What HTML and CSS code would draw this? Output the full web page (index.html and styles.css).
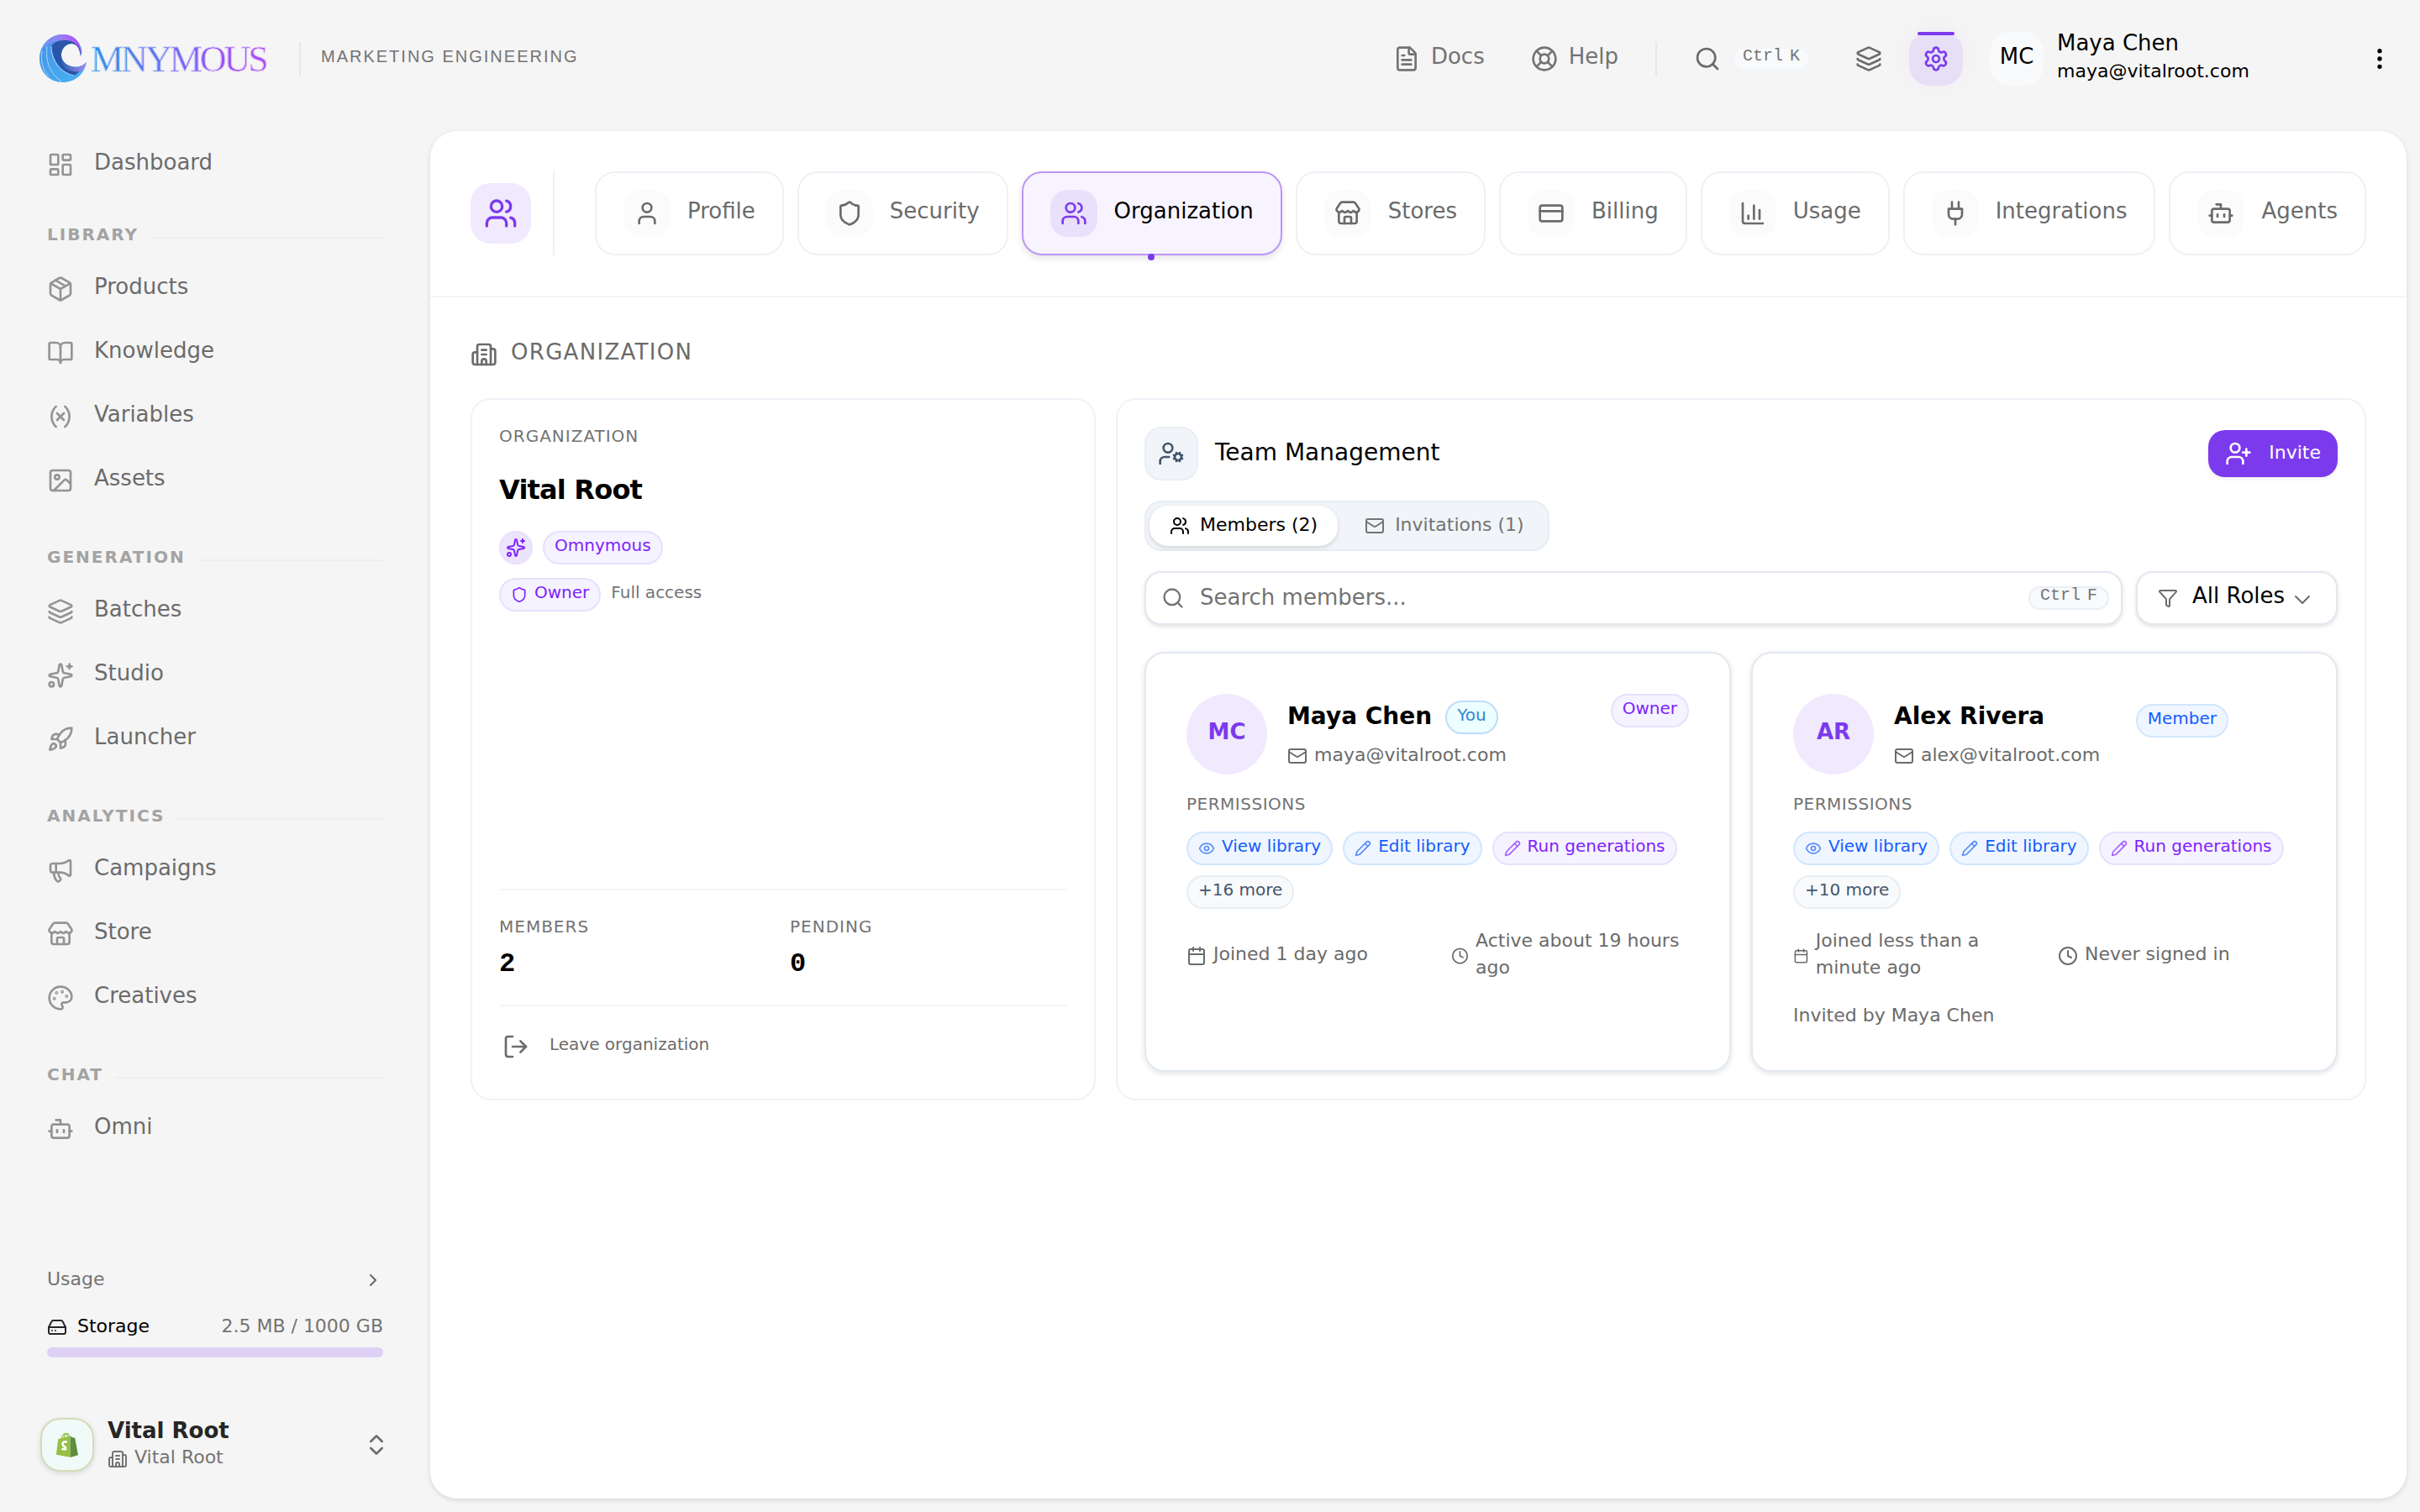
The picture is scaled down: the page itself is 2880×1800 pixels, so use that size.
FILE: index.html
```html
<!DOCTYPE html>
<html lang="en">
<head>
    <meta charset="UTF-8">
    <title>Omnymous - Organization</title>
    <link rel="stylesheet" href="styles.css">
</head>
<body>
    <!-- icon set -->
    <svg class="sprite" aria-hidden="true">
        <symbol id="dashboard" viewBox="0 0 24 24"><rect x="3" y="3" width="7" height="9" rx="1"/><rect x="14" y="3" width="7" height="5" rx="1"/><rect x="14" y="12" width="7" height="9" rx="1"/><rect x="3" y="16" width="7" height="5" rx="1"/></symbol>
        <symbol id="package" viewBox="0 0 24 24"><path d="M11 21.73a2 2 0 0 0 2 0l7-4A2 2 0 0 0 21 16V8a2 2 0 0 0-1-1.73l-7-4a2 2 0 0 0-2 0l-7 4A2 2 0 0 0 3 8v8a2 2 0 0 0 1 1.73z"/><path d="M12 22V12"/><path d="M3.29 7 12 12l8.71-5"/><path d="m7.5 4.27 9 5.15"/></symbol>
        <symbol id="book" viewBox="0 0 24 24"><path d="M12 7v14"/><path d="M3 18a1 1 0 0 1-1-1V4a1 1 0 0 1 1-1h5a4 4 0 0 1 4 4 4 4 0 0 1 4-4h5a1 1 0 0 1 1 1v13a1 1 0 0 1-1 1h-6a3 3 0 0 0-3 3 3 3 0 0 0-3-3z"/></symbol>
        <symbol id="variable" viewBox="0 0 24 24"><path d="M8 21s-4-3-4-9 4-9 4-9"/><path d="M16 3s4 3 4 9-4 9-4 9"/><path d="m15 9-6 6"/><path d="m9 9 6 6"/></symbol>
        <symbol id="image" viewBox="0 0 24 24"><rect x="3" y="3" width="18" height="18" rx="2"/><circle cx="9" cy="9" r="2"/><path d="m21 15-3.086-3.086a2 2 0 0 0-2.828 0L6 21"/></symbol>
        <symbol id="layers" viewBox="0 0 24 24"><path d="M12.83 2.18a2 2 0 0 0-1.66 0L2.6 6.08a1 1 0 0 0 0 1.83l8.58 3.91a2 2 0 0 0 1.66 0l8.58-3.9a1 1 0 0 0 0-1.83z"/><path d="M2 12a1 1 0 0 0 .58.91l8.6 3.91a2 2 0 0 0 1.65 0l8.58-3.9A1 1 0 0 0 22 12"/><path d="M2 17a1 1 0 0 0 .58.91l8.6 3.91a2 2 0 0 0 1.65 0l8.58-3.9A1 1 0 0 0 22 17"/></symbol>
        <symbol id="sparkles" viewBox="0 0 24 24"><path d="M11.017 2.814a1 1 0 0 1 1.966 0l1.051 5.558a2 2 0 0 0 1.594 1.594l5.558 1.051a1 1 0 0 1 0 1.966l-5.558 1.051a2 2 0 0 0-1.594 1.594l-1.051 5.558a1 1 0 0 1-1.966 0l-1.051-5.558a2 2 0 0 0-1.594-1.594l-5.558-1.051a1 1 0 0 1 0-1.966l5.558-1.051a2 2 0 0 0 1.594-1.594z"/><path d="M20 2v4"/><path d="M22 4h-4"/><circle cx="4" cy="20" r="2"/></symbol>
        <symbol id="rocket" viewBox="0 0 24 24"><path d="M4.5 16.5c-1.5 1.26-2 5-2 5s3.74-.5 5-2c.71-.84.7-2.13-.09-2.91a2.18 2.18 0 0 0-2.91-.09z"/><path d="m12 15-3-3a22 22 0 0 1 2-3.95A12.88 12.88 0 0 1 22 2c0 2.72-.78 7.5-6 11a22.35 22.35 0 0 1-4 2z"/><path d="M9 12H4s.55-3.03 2-4c1.62-1.08 5 0 5 0"/><path d="M12 15v5s3.03-.55 4-2c1.08-1.62 0-5 0-5"/></symbol>
        <symbol id="megaphone" viewBox="0 0 24 24"><path d="M11 6a13 13 0 0 0 8.4-2.8A1 1 0 0 1 21 4v12a1 1 0 0 1-1.6.8A13 13 0 0 0 11 14H5a2 2 0 0 1-2-2V8a2 2 0 0 1 2-2z"/><path d="M6 14a12 12 0 0 0 2.4 7.2 2 2 0 0 0 3.2-2.4A8 8 0 0 1 10 14"/><path d="M8 6v8"/></symbol>
        <symbol id="store" viewBox="0 0 24 24"><path d="M15 21v-5a1 1 0 0 0-1-1h-4a1 1 0 0 0-1 1v5"/><path d="M17.774 10.31a1.12 1.12 0 0 0-1.549 0 2.5 2.5 0 0 1-3.451 0 1.12 1.12 0 0 0-1.548 0 2.5 2.5 0 0 1-3.452 0 1.12 1.12 0 0 0-1.549 0 2.5 2.5 0 0 1-3.77-3.248l2.889-4.184A2 2 0 0 1 7 2h10a2 2 0 0 1 1.653.873l2.895 4.192a2.5 2.5 0 0 1-3.774 3.244"/><path d="M4 10.95V19a2 2 0 0 0 2 2h12a2 2 0 0 0 2-2v-8.05"/></symbol>
        <symbol id="palette" viewBox="0 0 24 24"><path d="M12 22a1 1 0 0 1 0-20 10 9 0 0 1 10 9 5 5 0 0 1-5 5h-2.25a1.75 1.75 0 0 0-1.4 2.8l.3.4a1.75 1.75 0 0 1-1.4 2.8z"/><circle cx="13.5" cy="6.5" r=".5"/><circle cx="17.5" cy="10.5" r=".5"/><circle cx="6.5" cy="12.5" r=".5"/><circle cx="8.5" cy="7.5" r=".5"/></symbol>
        <symbol id="bot" viewBox="0 0 24 24"><path d="M12 8V4H8"/><rect x="4" y="8" width="16" height="12" rx="2"/><path d="M2 14h2"/><path d="M20 14h2"/><path d="M15 13v2"/><path d="M9 13v2"/></symbol>
        <symbol id="chevron-right" viewBox="0 0 24 24"><path d="m9 18 6-6-6-6"/></symbol>
        <symbol id="chevron-down" viewBox="0 0 24 24"><path d="m6 9 6 6 6-6"/></symbol>
        <symbol id="chevrons" viewBox="0 0 24 24"><path d="m7 15 5 5 5-5"/><path d="m7 9 5-5 5 5"/></symbol>
        <symbol id="drive" viewBox="0 0 24 24"><path d="M22 12H2"/><path d="M5.45 5.11 2 12v6a2 2 0 0 0 2 2h16a2 2 0 0 0 2-2v-6l-3.45-6.89A2 2 0 0 0 16.76 4H7.24a2 2 0 0 0-1.79 1.11z"/><path d="M6 16h.01"/><path d="M10 16h.01"/></symbol>
        <symbol id="building" viewBox="0 0 24 24"><path d="M10 12h4"/><path d="M10 8h4"/><path d="M14 21v-3a2 2 0 0 0-4 0v3"/><path d="M6 10H4a2 2 0 0 0-2 2v7a2 2 0 0 0 2 2h16a2 2 0 0 0 2-2V9a2 2 0 0 0-2-2h-2"/><path d="M6 21V5a2 2 0 0 1 2-2h8a2 2 0 0 1 2 2v16"/></symbol>
        <symbol id="file" viewBox="0 0 24 24"><path d="M6 22a2 2 0 0 1-2-2V4a2 2 0 0 1 2-2h8a2.4 2.4 0 0 1 1.704.706l3.588 3.588A2.4 2.4 0 0 1 20 8v12a2 2 0 0 1-2 2z"/><path d="M14 2v5a1 1 0 0 0 1 1h5"/><path d="M10 9H8"/><path d="M16 13H8"/><path d="M16 17H8"/></symbol>
        <symbol id="lifebuoy" viewBox="0 0 24 24"><circle cx="12" cy="12" r="10"/><path d="m4.93 4.93 4.24 4.24"/><path d="m14.83 9.17 4.24-4.24"/><path d="m14.83 14.83 4.24 4.24"/><path d="m9.17 14.83-4.24 4.24"/><circle cx="12" cy="12" r="4"/></symbol>
        <symbol id="search" viewBox="0 0 24 24"><path d="m21 21-4.34-4.34"/><circle cx="11" cy="11" r="8"/></symbol>
        <symbol id="settings" viewBox="0 0 24 24"><path d="M9.671 4.136a2.34 2.34 0 0 1 4.659 0 2.34 2.34 0 0 0 3.319 1.915 2.34 2.34 0 0 1 2.33 4.033 2.34 2.34 0 0 0 0 3.831 2.34 2.34 0 0 1-2.33 4.033 2.34 2.34 0 0 0-3.319 1.915 2.34 2.34 0 0 1-4.659 0 2.34 2.34 0 0 0-3.32-1.915 2.34 2.34 0 0 1-2.33-4.033 2.34 2.34 0 0 0 0-3.831A2.34 2.34 0 0 1 6.35 6.051a2.34 2.34 0 0 0 3.319-1.915"/><circle cx="12" cy="12" r="3"/></symbol>
        <symbol id="dots" viewBox="0 0 24 24"><circle cx="12" cy="12" r="1"/><circle cx="12" cy="5" r="1"/><circle cx="12" cy="19" r="1"/></symbol>
        <symbol id="users" viewBox="0 0 24 24"><path d="M16 21v-2a4 4 0 0 0-4-4H6a4 4 0 0 0-4 4v2"/><path d="M16 3.128a4 4 0 0 1 0 7.744"/><path d="M22 21v-2a4 4 0 0 0-3-3.87"/><circle cx="9" cy="7" r="4"/></symbol>
        <symbol id="user" viewBox="0 0 24 24"><path d="M19 21v-2a4 4 0 0 0-4-4H9a4 4 0 0 0-4 4v2"/><circle cx="12" cy="7" r="4"/></symbol>
        <symbol id="shield" viewBox="0 0 24 24"><path d="M20 13c0 5-3.5 7.5-7.66 8.95a1 1 0 0 1-.67-.01C7.5 20.5 4 18 4 13V6a1 1 0 0 1 1-1c2 0 4.5-1.2 6.24-2.72a1.17 1.17 0 0 1 1.52 0C14.51 3.81 17 5 19 5a1 1 0 0 1 1 1z"/></symbol>
        <symbol id="card" viewBox="0 0 24 24"><rect x="2" y="5" width="20" height="14" rx="2"/><path d="M2 10h20"/></symbol>
        <symbol id="chart" viewBox="0 0 24 24"><path d="M3 3v16a2 2 0 0 0 2 2h16"/><path d="M18 17V9"/><path d="M13 17V5"/><path d="M8 17v-3"/></symbol>
        <symbol id="plug" viewBox="0 0 24 24"><path d="M12 22v-5"/><path d="M9 8V2"/><path d="M15 8V2"/><path d="M18 8v5a4 4 0 0 1-4 4h-4a4 4 0 0 1-4-4V8Z"/></symbol>
        <symbol id="logout" viewBox="0 0 24 24"><path d="m16 17 5-5-5-5"/><path d="M21 12H9"/><path d="M9 21H5a2 2 0 0 1-2-2V5a2 2 0 0 1 2-2h4"/></symbol>
        <symbol id="user-cog" viewBox="0 0 24 24"><path d="M10 15H6a4 4 0 0 0-4 4v2"/><circle cx="9" cy="7" r="4"/><path d="m14.305 16.53.923-.382"/><path d="m15.228 13.852-.923-.383"/><path d="m16.852 12.228-.383-.923"/><path d="m16.852 17.772-.383.924"/><path d="m19.148 12.228.383-.923"/><path d="m19.53 18.696-.382-.924"/><path d="m20.772 13.852.924-.383"/><path d="m20.772 16.148.924.383"/><circle cx="18" cy="15" r="3"/></symbol>
        <symbol id="user-plus" viewBox="0 0 24 24"><path d="M16 21v-2a4 4 0 0 0-4-4H6a4 4 0 0 0-4 4v2"/><circle cx="9" cy="7" r="4"/><path d="M19 8v6"/><path d="M22 11h-6"/></symbol>
        <symbol id="mail" viewBox="0 0 24 24"><path d="m22 7-8.991 5.727a2 2 0 0 1-2.009 0L2 7"/><rect x="2" y="4" width="20" height="16" rx="2"/></symbol>
        <symbol id="funnel" viewBox="0 0 24 24"><path d="M10 20a1 1 0 0 0 .553.895l2 1A1 1 0 0 0 14 21v-7a2 2 0 0 1 .517-1.341L21.74 4.67A1 1 0 0 0 21 3H3a1 1 0 0 0-.742 1.67l7.225 7.989A2 2 0 0 1 10 14z"/></symbol>
        <symbol id="eye" viewBox="0 0 24 24"><path d="M2.062 12.348a1 1 0 0 1 0-.696 10.75 10.75 0 0 1 19.876 0 1 1 0 0 1 0 .696 10.75 10.75 0 0 1-19.876 0"/><circle cx="12" cy="12" r="3"/></symbol>
        <symbol id="pencil" viewBox="0 0 24 24"><path d="M21.174 6.812a1 1 0 0 0-3.986-3.987L3.842 16.174a2 2 0 0 0-.5.83l-1.321 4.352a.5.5 0 0 0 .623.622l4.353-1.32a2 2 0 0 0 .83-.497z"/><path d="m15 5 4 4"/></symbol>
        <symbol id="calendar" viewBox="0 0 24 24"><path d="M8 2v4"/><path d="M16 2v4"/><rect x="3" y="4" width="18" height="18" rx="2"/><path d="M3 10h18"/></symbol>
        <symbol id="clock" viewBox="0 0 24 24"><circle cx="12" cy="12" r="10"/><path d="M12 6v6l4 2"/></symbol>
    </svg>

    <header class="topbar">
        <div class="logo">
            <svg class="logo-mark" viewBox="0 0 58 58">
                <defs>
                    <linearGradient id="gTop" x1="0" y1="0" x2="1" y2="0"><stop offset="0" stop-color="#6f9cf3"/><stop offset=".5" stop-color="#9b7bf5"/><stop offset="1" stop-color="#b44cf5"/></linearGradient>
                    <linearGradient id="gBlue" x1="0" y1="0" x2="1" y2="1"><stop offset="0" stop-color="#4a8fe6"/><stop offset="1" stop-color="#46b4f2"/></linearGradient>
                    <linearGradient id="gTail" x1="0" y1="0" x2="1" y2="0"><stop offset="0" stop-color="#2c62b8"/><stop offset="1" stop-color="#a48cf0"/></linearGradient>
                </defs>
                <path fill="url(#gBlue)" d="M28 0C12 0 0 13 0 29s12 28 28 28c14 0 25-9 28-24-5 5-12 7-18 5-8-2-13-8-12-15 1-8 7-12 12-12 6 0 10 5 11 15 3-4 1-12-3-17C42 3 35 0 28 0z"/>
                <path fill="url(#gTop)" d="M3 17C8 6 17 0 28 0c14 0 23 10 21 26-1-13-9-19-21-19-11 0-18 4-25 10z"/>
                <path fill="#2a55a8" d="M49 26C50 13 40 6 28 7c-6 0-11 3-14 7 2 16 10 30 27 35 4-2 7-5 9-9-14 1-25-6-24-17 1-8 7-12 12-12 6 0 10 5 11 15z"/>
                <path fill="url(#gTail)" d="M56 33c-5 5-12 7-18 5-7-2-11-6-12-12-2 12 8 20 24 18 3-3 5-7 6-11z"/>
                <path class="logo-lines" d="M14 14c0 16 9 31 27 35M9 14c-2 18 3 32 17 42M3 20c-2 12 1 22 8 30"/>
            </svg>
            <span class="logo-text">MNYMOUS</span>
        </div>
        <i class="vline"></i>
        <span class="tagline">MARKETING ENGINEERING</span>

        <nav class="top-nav">
            <a class="top-link"><svg class="icon"><use href="#file"/></svg><span>Docs</span></a>
            <a class="top-link"><svg class="icon"><use href="#lifebuoy"/></svg><span>Help</span></a>
            <i class="vline"></i>
            <a class="top-search"><svg class="icon"><use href="#search"/></svg><kbd><span>Ctrl</span><span>K</span></kbd></a>
            <a class="top-icon"><svg class="icon"><use href="#layers"/></svg></a>
            <a class="top-icon active"><svg class="icon"><use href="#settings"/></svg></a>
        </nav>
        <div class="me">
            <div class="me-avatar"><span>MC</span></div>
            <div class="me-info">
                <div class="me-name">Maya Chen</div>
                <div class="me-mail">maya@vitalroot.com</div>
            </div>
            <svg class="icon"><use href="#dots"/></svg>
        </div>
    </header>

    <div class="layout">
        <aside class="sidebar">
            <nav class="side-nav">
                <a><svg class="icon"><use href="#dashboard"/></svg><span>Dashboard</span></a>
                <h4><span>LIBRARY</span></h4>
                <a><svg class="icon"><use href="#package"/></svg><span>Products</span></a>
                <a><svg class="icon"><use href="#book"/></svg><span>Knowledge</span></a>
                <a><svg class="icon"><use href="#variable"/></svg><span>Variables</span></a>
                <a><svg class="icon"><use href="#image"/></svg><span>Assets</span></a>
                <h4><span>GENERATION</span></h4>
                <a><svg class="icon"><use href="#layers"/></svg><span>Batches</span></a>
                <a><svg class="icon"><use href="#sparkles"/></svg><span>Studio</span></a>
                <a><svg class="icon"><use href="#rocket"/></svg><span>Launcher</span></a>
                <h4><span>ANALYTICS</span></h4>
                <a><svg class="icon"><use href="#megaphone"/></svg><span>Campaigns</span></a>
                <a><svg class="icon"><use href="#store"/></svg><span>Store</span></a>
                <a><svg class="icon"><use href="#palette"/></svg><span>Creatives</span></a>
                <h4><span>CHAT</span></h4>
                <a><svg class="icon"><use href="#bot"/></svg><span>Omni</span></a>
            </nav>

            <div class="usage">
                <div class="usage-row"><span class="muted">Usage</span><svg class="icon small"><use href="#chevron-right"/></svg></div>
                <div class="usage-row storage">
                    <svg class="icon small"><use href="#drive"/></svg>
                    <span class="storage-name">Storage</span>
                    <span class="muted">2.5 MB / 1000 GB</span>
                </div>
                <div class="bar"></div>
            </div>

            <div class="account">
                <div class="shop">
                    <svg viewBox="0 0 32 32">
                        <path d="M8.5 9.5C9 5.5 11.5 1.8 14 1.4c2-.2 2.500 2.600 2.600 6.300M11.500 8.500c.7-4 2.600-6.500 4.500-6.800 1.600 0 2.600 2 3 5.300" fill="none" stroke="#95bf47" stroke-width="1.300"/>
                        <path d="M4.500 8.800 20 4.800v27L2 28.600z" fill="#95bf47"/>
                        <path d="m20 4.800 1.800 1.700 4 .7L29.800 29 20 32z" fill="#5e8e3e"/>
                        <path d="M15.800 12.700c-3-1.400-6 .1-5.800 2.500.2 2.800 4 2.900 4 5.200 0 2-2.700 1.900-4.800.3" fill="none" stroke="#fff" stroke-width="2.800"/>
                    </svg>
                </div>
                <div class="account-info">
                    <div class="account-name">Vital Root</div>
                    <div class="account-org"><svg class="icon small"><use href="#building"/></svg><span>Vital Root</span></div>
                </div>
                <svg class="icon"><use href="#chevrons"/></svg>
            </div>
        </aside>

        <main class="panel">
            <div class="tabs-bar">
                <div class="tabs-icon"><svg class="icon big"><use href="#users"/></svg></div>
                <i class="tabs-line"></i>
                <div class="tabs">
                    <a class="tab"><b><svg class="icon"><use href="#user"/></svg></b><span>Profile</span></a>
                    <a class="tab"><b><svg class="icon"><use href="#shield"/></svg></b><span>Security</span></a>
                    <a class="tab active"><b><svg class="icon"><use href="#users"/></svg></b><span>Organization</span></a>
                    <a class="tab"><b><svg class="icon"><use href="#store"/></svg></b><span>Stores</span></a>
                    <a class="tab"><b><svg class="icon"><use href="#card"/></svg></b><span>Billing</span></a>
                    <a class="tab"><b><svg class="icon"><use href="#chart"/></svg></b><span>Usage</span></a>
                    <a class="tab"><b><svg class="icon"><use href="#plug"/></svg></b><span>Integrations</span></a>
                    <a class="tab"><b><svg class="icon"><use href="#bot"/></svg></b><span>Agents</span></a>
                </div>
            </div>

            <div class="content">
                <h2 class="page-title"><svg class="icon"><use href="#building"/></svg><span>ORGANIZATION</span></h2>

                <div class="grid">
                    <section class="box org">
                        <div class="label">ORGANIZATION</div>
                        <h3>Vital Root</h3>
                        <div class="pills">
                            <i class="pill violet round"><svg class="icon small"><use href="#sparkles"/></svg></i>
                            <i class="pill violet"><span>Omnymous</span></i>
                        </div>
                        <div class="pills second">
                            <i class="pill violet"><svg class="icon tiny solid"><use href="#shield"/></svg><span>Owner</span></i>
                            <span class="access">Full access</span>
                        </div>
                        <div class="stats">
                            <div><div class="label">MEMBERS</div><div class="num">2</div></div>
                            <div><div class="label">PENDING</div><div class="num">0</div></div>
                        </div>
                        <div class="leave"><svg class="icon"><use href="#logout"/></svg><span>Leave organization</span></div>
                    </section>

                    <section class="box team">
                        <div class="team-head">
                            <div class="team-icon"><svg class="icon"><use href="#user-cog"/></svg></div>
                            <h3><span>Team Management</span></h3>
                            <button class="invite"><svg class="icon"><use href="#user-plus"/></svg><span>Invite</span></button>
                        </div>

                        <div class="switch">
                            <a class="on"><svg class="icon small"><use href="#users"/></svg><span>Members (2)</span></a>
                            <a><svg class="icon small"><use href="#mail"/></svg><span>Invitations (1)</span></a>
                        </div>

                        <div class="filters">
                            <div class="field search"><svg class="icon"><use href="#search"/></svg><span>Search members...</span><kbd><span>Ctrl</span><span>F</span></kbd></div>
                            <div class="field roles"><svg class="icon small"><use href="#funnel"/></svg><span>All Roles</span><svg class="icon chev"><use href="#chevron-down"/></svg></div>
                        </div>

                        <div class="members">
                            <article class="member">
                                <div class="member-head">
                                    <div class="avatar"><span>MC</span></div>
                                    <div class="who">
                                        <div class="name"><span>Maya Chen</span><i class="pill cyan"><span>You</span></i></div>
                                        <div class="mail"><svg class="icon small"><use href="#mail"/></svg><span>maya@vitalroot.com</span></div>
                                    </div>
                                    <div class="role"><i class="pill violet"><span>Owner</span></i></div>
                                </div>
                                <div class="perm-label">PERMISSIONS</div>
                                <div class="perms">
                                    <i class="pill blue"><svg class="icon tiny"><use href="#eye"/></svg><span>View library</span></i>
                                    <i class="pill blue"><svg class="icon tiny"><use href="#pencil"/></svg><span>Edit library</span></i>
                                    <i class="pill violet"><svg class="icon tiny"><use href="#pencil"/></svg><span>Run generations</span></i>
                                    <i class="pill gray"><span>+16 more</span></i>
                                </div>
                                <div class="meta">
                                    <div><svg class="icon"><use href="#calendar"/></svg><span>Joined 1 day ago</span></div>
                                    <div><svg class="icon"><use href="#clock"/></svg><span>Active about 19 hours ago</span></div>
                                </div>
                            </article>

                            <article class="member">
                                <div class="member-head">
                                    <div class="avatar"><span>AR</span></div>
                                    <div class="who">
                                        <div class="name"><span>Alex Rivera</span></div>
                                        <div class="mail"><svg class="icon small"><use href="#mail"/></svg><span>alex@vitalroot.com</span></div>
                                    </div>
                                    <div class="role"><i class="pill blue"><span>Member</span></i><span class="more"></span></div>
                                </div>
                                <div class="perm-label">PERMISSIONS</div>
                                <div class="perms">
                                    <i class="pill blue"><svg class="icon tiny"><use href="#eye"/></svg><span>View library</span></i>
                                    <i class="pill blue"><svg class="icon tiny"><use href="#pencil"/></svg><span>Edit library</span></i>
                                    <i class="pill violet"><svg class="icon tiny"><use href="#pencil"/></svg><span>Run generations</span></i>
                                    <i class="pill gray"><span>+10 more</span></i>
                                </div>
                                <div class="meta">
                                    <div><svg class="icon"><use href="#calendar"/></svg><span>Joined less than a minute ago</span></div>
                                    <div><svg class="icon"><use href="#clock"/></svg><span>Never signed in</span></div>
                                </div>
                                <div class="invited"><span>Invited by Maya Chen</span></div>
                            </article>
                        </div>
                    </section>
                </div>
            </div>
        </main>
    </div>
</body>
</html>
```
FILE: styles.css
```css
* {
    box-sizing: border-box;
    margin: 0;
}
body {
    width: 2880px;
    height: 1800px;
    overflow: hidden;
    background-color: #f5f5f5;
    color: #000;
    font-family: "DejaVu Sans", sans-serif;
    font-size: 26px;
    line-height: 32px;
}
i {
    font-style: normal;
}
.sprite {
    display: none;
}
.icon {
    width: 32px;
    height: 32px;
    flex-shrink: 0;
    fill: none;
    stroke: currentColor;
    stroke-width: 2;
    stroke-linecap: round;
    stroke-linejoin: round;
}
.icon.big {
    width: 40px;
    height: 40px;
}
.icon.small {
    width: 24px;
    height: 24px;
}
.icon.tiny {
    width: 20px;
    height: 20px;
    opacity: 0.7;
}
.icon.solid {
    opacity: 1;
}
.muted {
    color: #737373;
}

/* top bar */
.topbar {
    height: 156px;
    padding: 0 32px 16px 47px;
    display: flex;
    align-items: center;
}
.logo {
    display: flex;
    align-items: center;
    width: 309px;
}
.logo-mark {
    width: 58px;
    height: 58px;
}
.logo-lines {
    fill: none;
    stroke: #a5d8fa;
    stroke-width: 1;
}
.logo-text {
    font-family: "Liberation Serif", serif;
    font-size: 44px;
    line-height: 48px;
    letter-spacing: -3px;
    margin-left: 3px;
    padding-top: 2px;
    color: transparent;
    background-image: linear-gradient(90deg, #2f8fe8, #6a6cf5 45%, #9a4cf8 75%, #b14df7);
    -webkit-background-clip: text;
    background-clip: text;
    /* thins the letters a bit */
    -webkit-text-stroke: 0.7px #f5f5f5;
}
.vline {
    width: 2px;
    height: 40px;
    background-color: #e2e8f0;
}
.tagline {
    margin-left: 24px;
    padding-bottom: 7px;
    font-family: "Liberation Sans", sans-serif;
    font-size: 20px;
    letter-spacing: 2px;
    color: #737373;
}
.top-nav {
    margin-left: auto;
    display: flex;
    align-items: center;
    color: #6b6b6b;
}
.top-link {
    display: flex;
    align-items: center;
    gap: 13px;
    margin-right: 55px;
    color: #737373;
}
.top-link + .vline {
    margin: 0 44px 0 -11px;
}
.top-link span {
    padding-bottom: 6px;
}
.top-search {
    display: flex;
    align-items: center;
    gap: 14px;
    margin-right: 38px;
}
kbd {
    display: flex;
    justify-content: center;
    gap: 8px;
    width: 92px;
    height: 28px;
    border-radius: 14px;
    border: 2px solid #f1f5f9;
    background-color: #f8fafc;
    font-family: "Liberation Mono", monospace;
    font-size: 20px;
    line-height: 18px;
    color: #737373;
}
.top-icon {
    display: flex;
    align-items: center;
    justify-content: center;
    width: 64px;
    height: 64px;
    margin-right: 16px;
}
.top-icon.active {
    position: relative;
    margin-right: 32px;
    border-radius: 24px;
    color: #7c3aed;
    background-color: #e6dff6;
    box-shadow: 0 -4px 24px rgba(124, 58, 237, 0.05);
}
.top-icon.active::before {
    content: "";
    position: absolute;
    top: 0;
    left: 10px;
    width: 44px;
    height: 4px;
    border-radius: 2px;
    background-color: #7c3aed;
}
.me {
    display: flex;
    align-items: center;
    width: 480px;
}
.me-avatar {
    display: flex;
    align-items: center;
    justify-content: center;
    width: 64px;
    height: 64px;
    border-radius: 24px;
    background-color: #f8fafc;
}
.me-avatar span {
    padding-bottom: 6px;
}
.me-info {
    flex: 1;
    margin-left: 16px;
    padding-bottom: 4px;
}
.me-mail {
    padding-top: 2px;
    font-size: 22px;
}

/* sidebar */
.layout {
    display: flex;
    height: 1644px;
}
.sidebar {
    width: 512px;
    padding: 4px 48px 0 56px;
    display: flex;
    flex-direction: column;
}
.side-nav {
    width: 400px;
}
.side-nav a {
    display: flex;
    align-items: center;
    gap: 24px;
    height: 72px;
    margin-bottom: 4px;
    color: #6b6b6b;
}
.side-nav a .icon {
    color: #949494;
}
.side-nav a span {
    padding-bottom: 6px;
}
.side-nav h4 {
    display: flex;
    align-items: center;
    gap: 15px;
    height: 50px;
    margin-top: 34px;
    font-size: 20px;
    letter-spacing: 2px;
    color: #a3a3a3;
}
.side-nav a:first-child + h4 {
    margin-top: 26px;
}
.side-nav h4 span {
    padding-bottom: 8px;
}
.side-nav h4::after {
    content: "";
    flex: 1;
    height: 2px;
    background-color: #eaeff5;
}
.usage {
    width: 400px;
    margin-top: auto;
    font-size: 22px;
}
.usage-row {
    display: flex;
    align-items: center;
    justify-content: space-between;
    height: 32px;
}
.usage-row .icon {
    color: #666;
}
.usage-row span {
    padding-bottom: 3px;
}
.storage {
    margin-top: 24px;
}
.storage .icon {
    color: #262626;
}
.storage-name {
    margin: 0 auto 0 12px;
}
.bar {
    height: 12px;
    margin-top: 8px;
    border-radius: 6px;
    background-color: #ddd0f4;
}
.account {
    display: flex;
    align-items: center;
    height: 64px;
    margin: 72px 0 48px -8px;
    color: #6b6b6b;
}
.shop {
    display: flex;
    align-items: center;
    justify-content: center;
    width: 64px;
    height: 64px;
    border: 2px solid #d5dbb8;
    border-radius: 24px;
    background-color: #f0faf8;
    box-shadow: 0 2px 6px rgba(0, 0, 0, 0.12);
}
.shop svg {
    width: 30px;
    height: 32px;
}
.account-info {
    flex: 1;
    margin-left: 16px;
    padding-bottom: 3px;
}
.account-name {
    font-weight: bold;
    color: #262626;
}
.account-org {
    display: flex;
    align-items: center;
    gap: 8px;
    height: 32px;
    font-size: 22px;
    color: #737373;
}
.account-org .icon {
    margin-top: 4px;
}

/* main panel */
.panel {
    width: 2352px;
    height: 1628px;
    border-radius: 32px;
    background-color: #fff;
    box-shadow: 0 2px 6px rgba(0, 0, 0, 0.12);
}
.tabs-bar {
    display: flex;
    align-items: center;
    height: 198px;
    padding: 0 48px;
    border-bottom: 2px solid #f1f5f9;
}
.tabs-icon {
    display: flex;
    align-items: center;
    justify-content: center;
    width: 72px;
    height: 72px;
    border-radius: 24px;
    color: #7c3aed;
    background-color: #f1e9fe;
}
.tabs-line {
    width: 2px;
    height: 100px;
    margin-left: 26px;
    background-color: #edf2f7;
}
.tabs {
    flex: 1;
    display: flex;
    justify-content: space-between;
    margin-left: 48px;
}
.tab {
    position: relative;
    display: flex;
    align-items: center;
    height: 100px;
    padding: 0 32px;
    border: 2px solid #edf2f7;
    border-radius: 24px;
    color: #6b6b6b;
}
.tab b {
    display: flex;
    align-items: center;
    justify-content: center;
    width: 56px;
    height: 56px;
    margin-right: 20px;
    border-radius: 20px;
    background-color: #fbfbfb;
}
.tab span {
    padding-bottom: 6px;
}
.tab.active {
    color: #000;
    border-color: #bb97f6;
    background-color: #f8f4ff;
    box-shadow: 0 4px 8px rgba(0, 0, 0, 0.1);
}
.tab.active b {
    color: #7c3aed;
    background-color: #e9e0fc;
}
.tab.active::after {
    content: "";
    position: absolute;
    left: 50%;
    bottom: -8px;
    width: 8px;
    height: 8px;
    margin-left: -5px;
    border-radius: 50%;
    background-color: #7c3aed;
}
.content {
    padding: 52px 48px;
}
.page-title {
    display: flex;
    align-items: center;
    gap: 16px;
    height: 32px;
    font-size: 26px;
    font-weight: normal;
    letter-spacing: 1.3px;
    color: #6b6b6b;
}
.page-title span {
    padding-bottom: 6px;
}
.grid {
    display: grid;
    grid-template-columns: 1fr 2fr;
    gap: 24px;
    margin-top: 36px;
}
.box {
    padding: 32px;
    border: 2px solid #eff3f8;
    border-radius: 24px;
}
.label {
    font-size: 20px;
    line-height: 24px;
    letter-spacing: 1px;
    color: #737373;
}

/* organization card */
.org {
    display: flex;
    flex-direction: column;
    padding-top: 31px;
}
.org h3 {
    margin: 30px 0 27px;
    font-size: 32px;
    line-height: 44px;
    letter-spacing: -0.8px;
}
.pills {
    display: flex;
    gap: 12px;
}
.pills.second {
    margin-top: 16px;
}
.pill {
    display: inline-flex;
    align-items: center;
    gap: 8px;
    height: 40px;
    padding: 0 12px;
    border: 2px solid;
    border-radius: 20px;
    font-size: 20px;
}
.pill span {
    padding-bottom: 6px;
    line-height: 24px;
}
.round {
    width: 40px;
    padding: 0;
    justify-content: center;
}
.violet {
    color: #7f22fe;
    background-color: #f5f3ff;
    border-color: #e9dffc;
}
.violet.round {
    background-color: #ece4fc;
}
.blue {
    color: #155dfc;
    background-color: #eff6ff;
    border-color: #cfe7fe;
}
.cyan {
    color: #2f86d6;
    background-color: #ecfeff;
    border-color: #bfdcfb;
}
.gray {
    color: #45556c;
    background-color: #f8fafc;
    border-color: #e8edf4;
}
.access {
    font-size: 20px;
    line-height: 34px;
    color: #737373;
}
.stats {
    display: grid;
    grid-template-columns: 1fr 1fr;
    gap: 16px;
    margin-top: auto;
    padding: 31px 0 27px;
    border-top: 2px solid #f1f5f9;
    border-bottom: 2px solid #f1f5f9;
}
.num {
    margin-top: 12px;
    font-family: "Liberation Mono", monospace;
    font-size: 32px;
    font-weight: bold;
    line-height: 42px;
}
.leave {
    display: flex;
    align-items: center;
    gap: 24px;
    margin-top: 29px;
    padding: 0 4px 11px;
    font-size: 20px;
    color: #6b6b6b;
}
.leave span {
    padding-bottom: 6px;
}

/* team card */
.team-head {
    display: flex;
    align-items: center;
}
.team-icon {
    display: flex;
    align-items: center;
    justify-content: center;
    width: 64px;
    height: 64px;
    border: 2px solid #e8eef5;
    border-radius: 20px;
    color: #45556c;
    background-color: #f1f5f9;
}
.team-head h3 {
    margin-left: 20px;
    font-size: 28px;
    font-weight: normal;
}
.team-head h3 span {
    display: block;
    padding-bottom: 2px;
}
.invite {
    display: flex;
    align-items: center;
    gap: 20px;
    height: 56px;
    margin-left: auto;
    padding: 0 20px;
    border: none;
    border-radius: 20px;
    font-family: inherit;
    font-size: 22px;
    color: #fff;
    background-color: #7c3aed;
    box-shadow: 0 2px 4px rgba(0, 0, 0, 0.08);
}
.invite span {
    padding-bottom: 3px;
}
.switch {
    display: inline-flex;
    gap: 8px;
    height: 60px;
    margin-top: 24px;
    padding: 4px;
    border: 2px solid #e8edf4;
    border-radius: 20px;
    font-size: 22px;
    color: #737373;
    background-color: #f1f5f9;
}
.switch a {
    display: flex;
    align-items: center;
    gap: 12px;
    height: 48px;
    padding: 0 24px;
    border-radius: 22px;
}
.switch span {
    padding-bottom: 2px;
}
.switch .on {
    color: #000;
    background-color: #fff;
    box-shadow: 0 2px 5px rgba(0, 0, 0, 0.14);
}
.filters {
    display: flex;
    gap: 16px;
    margin-top: 24px;
}
.field {
    display: flex;
    align-items: center;
    height: 64px;
    border: 2px solid #e2e8f0;
    border-radius: 20px;
    background-color: #fff;
    box-shadow: 0 2px 5px rgba(0, 0, 0, 0.12);
}
.field > span {
    padding-bottom: 2px;
}
.search {
    flex: 1;
    padding: 0 14px 0 18px;
    color: #737373;
}
.search > .icon {
    width: 28px;
    height: 28px;
    margin-right: 18px;
}
.search kbd {
    width: 96px;
    margin-left: auto;
    border-color: #e9eff5;
}
.roles {
    width: 240px;
    padding-left: 24px;
}
.roles .icon {
    color: #6b6b6b;
}
.roles > span {
    margin: 0 5px 0 17px;
    padding-bottom: 6px;
}
.chev {
    margin-top: 3px;
    stroke-width: 1.5;
}
.members {
    display: grid;
    grid-template-columns: 1fr 1fr;
    gap: 24px;
    margin-top: 32px;
}
.member {
    height: 500px;
    padding: 48px;
    border: 2px solid #e2e8f0;
    border-radius: 24px;
    box-shadow: 0 2px 6px rgba(0, 0, 0, 0.12);
}
.member-head {
    display: flex;
    height: 96px;
}
.avatar {
    display: flex;
    align-items: center;
    justify-content: center;
    width: 96px;
    height: 96px;
    border-radius: 50%;
    font-weight: bold;
    color: #7c3aed;
    background-color: #f1e9fe;
}
.avatar span {
    padding-bottom: 6px;
}
.who {
    margin: 8px 0 0 24px;
}
.name {
    display: flex;
    align-items: center;
    gap: 16px;
    height: 40px;
    font-size: 28px;
    font-weight: bold;
}
.name > span {
    padding-bottom: 2px;
}
.name .pill {
    font-weight: normal;
}
.mail {
    display: flex;
    align-items: center;
    gap: 8px;
    height: 32px;
    margin-top: 10px;
    font-size: 22px;
    color: #6b6b6b;
}
.mail span {
    padding-bottom: 2px;
}
.role {
    display: flex;
    align-items: center;
    gap: 16px;
    align-self: flex-start;
    margin-left: auto;
}
.more {
    width: 64px;
    height: 64px;
}
.perm-label {
    margin-top: 21px;
    font-size: 20px;
    line-height: 28px;
    letter-spacing: 0.5px;
    color: #737373;
}
.perms {
    display: flex;
    flex-wrap: wrap;
    gap: 12px;
    margin-top: 19px;
}
.meta {
    display: grid;
    grid-template-columns: 1fr 1fr;
    gap: 32px;
    height: 64px;
    margin-top: 22px;
    font-size: 22px;
    color: #6b6b6b;
}
.meta div {
    display: flex;
    align-items: center;
    gap: 8px;
}
.meta .icon {
    width: 24px;
    height: 24px;
    flex-shrink: 1;
}
.meta span {
    padding-bottom: 3px;
}
.invited {
    margin-top: 25px;
    font-size: 22px;
    color: #6b6b6b;
}
```
